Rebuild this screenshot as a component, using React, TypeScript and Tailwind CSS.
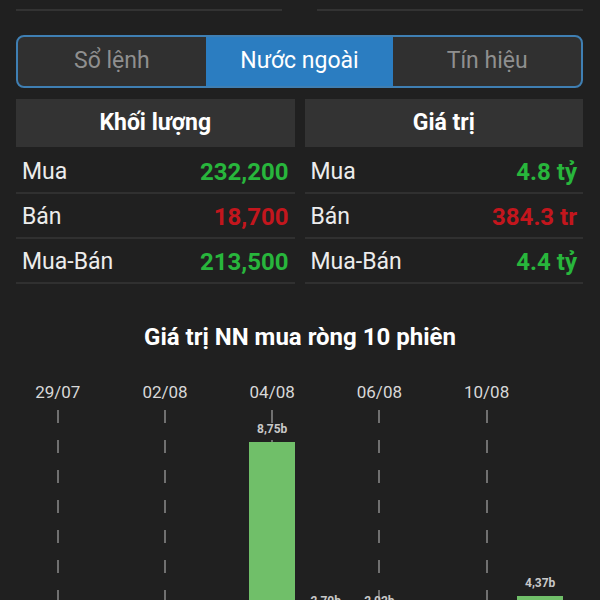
import React from 'react';

const rows = [
  { label: 'Mua', vol: '232,200', val: '4.8 tỷ', up: true },
  { label: 'Bán', vol: '18,700', val: '384.3 tr', up: false },
  { label: 'Mua-Bán', vol: '213,500', val: '4.4 tỷ', up: true },
];

const sessions = [
  { date: '29/07', value: null, bar: 0 },
  { date: '', value: null, bar: 0 },
  { date: '02/08', value: null, bar: 0 },
  { date: '', value: null, bar: 0 },
  { date: '04/08', value: '8,75b', bar: 240 },
  { date: '', value: '2,70b', bar: 68 },
  { date: '06/08', value: '2,02b', bar: 68 },
  { date: '', value: null, bar: 0 },
  { date: '10/08', value: null, bar: 0 },
  { date: '', value: '4,37b', bar: 86 },
];

function Table({ title, pick }: { title: string; pick: (r: (typeof rows)[number]) => string }) {
  return (
    <div>
      <div className="h-[48px] bg-[#333333] flex items-center justify-center text-[23px] font-bold text-white">
        {title}
      </div>
      <div className="mt-[2px]">
        {rows.map((r) => (
          <div
            key={r.label}
            className="h-[45px] border-b-2 border-[#303030] flex items-center justify-between pl-[6px] pr-[6px] pt-[3px]"
          >
            <span className="text-[23px] text-[#ececec]">{r.label}</span>
            <span className={`text-[24px] font-bold ${r.up ? 'text-[#28b63c]' : 'text-[#c3161d]'}`}>{pick(r)}</span>
          </div>
        ))}
      </div>
    </div>
  );
}

export default function App() {
  return (
    <div className="w-[600px] h-[600px] overflow-hidden bg-[#202020] font-['Roboto',sans-serif] px-4 pt-[9px]">
      {/* top rules */}
      <div className="flex gap-[35px] pr-[1px]">
        <div className="flex-1 h-[2px] bg-[#333333]" />
        <div className="flex-1 h-[2px] bg-[#333333]" />
      </div>

      {/* segmented tabs */}
      <div className="mt-[24px] mr-[1px] h-[53px] rounded-lg border-2 border-[#3f7fb3] bg-[#303030] grid grid-cols-3 overflow-hidden text-[23px]">
        <div className="flex items-center justify-center text-[#8f8f8f]">Sổ lệnh</div>
        <div className="flex items-center justify-center bg-[#2b7dc1] text-white">Nước ngoài</div>
        <div className="flex items-center justify-center text-[#8f8f8f]">Tín hiệu</div>
      </div>

      {/* tables */}
      <div className="mt-[11px] mr-[1px] grid grid-cols-2 gap-[10px]">
        <Table title="Khối lượng" pick={(r) => r.vol} />
        <Table title="Giá trị" pick={(r) => r.val} />
      </div>

      {/* chart */}
      <div className="mt-[39px] text-center text-[24px] leading-[28px] font-bold text-white">
        Giá trị NN mua ròng 10 phiên
      </div>
      <div className="mt-[31px] ml-[15px] w-[536px] h-[300px] grid grid-cols-10">
        {sessions.map((s, i) => (
          <div key={i} className="flex flex-col items-center">
            <div className="h-[20px] leading-[20px] text-[17px] text-[#d8d8d8] whitespace-nowrap">{s.date}</div>
            <div className="relative flex-1 w-full mt-[8px] flex flex-col items-center justify-end">
              {s.date && (
                <div className="absolute top-0 bottom-0 left-1/2 -translate-x-1/2 w-[2px] bg-[linear-gradient(to_bottom,#707070_13px,transparent_13px)] bg-[length:2px_30px]" />
              )}
              {s.value && (
                <div className="relative text-[12px] leading-[14px] font-bold text-[#c8c8c8] mb-[6px]">{s.value}</div>
              )}
              {s.bar > 0 && (
                <div className="relative w-[46px] bg-[#70bf69]" style={{ height: s.bar }} />
              )}
            </div>
          </div>
        ))}
      </div>
    </div>
  );
}
